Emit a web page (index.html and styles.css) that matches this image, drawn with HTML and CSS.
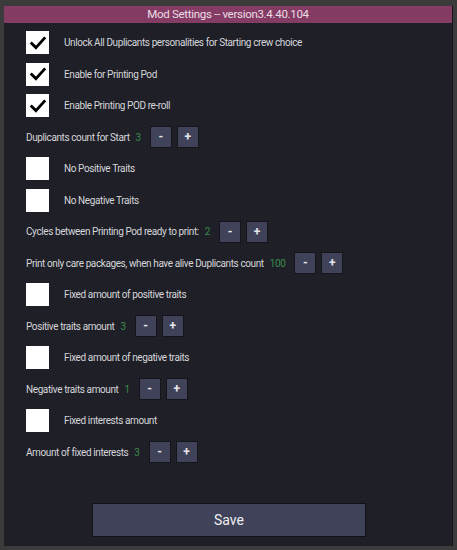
FILE: index.html
```html
<!DOCTYPE html>
<html>
  <head>
    <meta charset='utf-8' />
    <title>Mod Settings</title>
    <link rel="stylesheet" href="styles.css">
  </head>
  <body>
    <div class='window'>
      <div class='titlebar'>Mod Settings -- version3.4.40.104</div>
      <main class='settings'>
        <div class='row'>
          <span class='check on'><svg viewBox='0 0 24 24'><path d='M4.5 12.5 L9.5 17.5 L19.5 6.5' /></svg></span>
          <span class='label'>Unlock All Duplicants personalities for Starting crew choice</span>
        </div>
        <div class='row'>
          <span class='check on'><svg viewBox='0 0 24 24'><path d='M4.5 12.5 L9.5 17.5 L19.5 6.5' /></svg></span>
          <span class='label'>Enable for Printing Pod</span>
        </div>
        <div class='row'>
          <span class='check on'><svg viewBox='0 0 24 24'><path d='M4.5 12.5 L9.5 17.5 L19.5 6.5' /></svg></span>
          <span class='label'>Enable Printing POD re-roll</span>
        </div>
        <div class='row'>
          <span class='name'>Duplicants count for Start</span>
          <span class='value'>3</span>
          <button class='step'>-</button>
          <button class='step'>+</button>
        </div>
        <div class='row'>
          <span class='check'></span>
          <span class='label'>No Positive Traits</span>
        </div>
        <div class='row'>
          <span class='check'></span>
          <span class='label'>No Negative Traits</span>
        </div>
        <div class='row'>
          <span class='name'>Cycles between Printing Pod ready to print:</span>
          <span class='value'>2</span>
          <button class='step'>-</button>
          <button class='step'>+</button>
        </div>
        <div class='row'>
          <span class='name'>Print only care packages, when have alive Duplicants count</span>
          <span class='value'>100</span>
          <button class='step'>-</button>
          <button class='step'>+</button>
        </div>
        <div class='row'>
          <span class='check'></span>
          <span class='label'>Fixed amount of positive traits</span>
        </div>
        <div class='row'>
          <span class='name'>Positive traits amount</span>
          <span class='value'>3</span>
          <button class='step'>-</button>
          <button class='step'>+</button>
        </div>
        <div class='row'>
          <span class='check'></span>
          <span class='label'>Fixed amount of negative traits</span>
        </div>
        <div class='row'>
          <span class='name'>Negative traits amount</span>
          <span class='value'>1</span>
          <button class='step'>-</button>
          <button class='step'>+</button>
        </div>
        <div class='row'>
          <span class='check'></span>
          <span class='label'>Fixed interests amount</span>
        </div>
        <div class='row'>
          <span class='name'>Amount of fixed interests</span>
          <span class='value'>3</span>
          <button class='step'>-</button>
          <button class='step'>+</button>
        </div>
      </main>
      <div class='footer'>
        <button class='save'>Save</button>
      </div>
    </div>
  </body>
</html>
```

FILE: styles.css
```css
* {
  box-sizing: border-box;
}
body, html {
  margin: 0;
  padding: 0;
  width: 100vw;
  height: 100vh;
}
body {
  background: #3b3b3c;
  font-family: 'Roboto', sans-serif;
  color: #d6d6da;
  padding: 6px 4px 4px 4px;
}
.window {
  height: 540px;
  display: flex;
  flex-direction: column;
  background: #1e1f27;
  border-right: 1px solid #15161a;
}
.titlebar {
  height: 17px;
  line-height: 17px;
  background: #843c65;
  color: #ecdce6;
  text-align: center;
  font-size: 11.5px;
  letter-spacing: -0.3px;
}
.settings {
  flex: 1;
  padding: 4px 22px 0;
  display: flex;
  flex-direction: column;
}
.row {
  height: 31.5px;
  display: flex;
  align-items: center;
  font-size: 10px;
  letter-spacing: -0.4px;
}
.check {
  width: 23px;
  height: 23px;
  background: #ffffff;
  margin-right: 15px;
  display: flex;
  align-items: center;
  justify-content: center;
}
.check svg {
  width: 20px;
  height: 20px;
  fill: none;
  stroke: #000000;
  stroke-width: 3.4;
  stroke-linecap: square;
}
.value {
  color: #3a8d4d;
  margin-left: 6px;
  margin-right: 9px;
}
.step {
  width: 22px;
  height: 22px;
  margin: 0 5px 0 0;
  padding: 0;
  background: #3f4259;
  border: 1px solid #14151b;
  color: #e6e6ea;
  font-family: 'Roboto', sans-serif;
  font-size: 12px;
  font-weight: bold;
}
.footer {
  display: flex;
  justify-content: center;
  padding: 0 0 9px 2px;
}
.save {
  width: 274px;
  height: 34px;
  background: #3f4259;
  border: 1px solid #111218;
  color: #eeeef2;
  font-family: 'Roboto', sans-serif;
  font-size: 14px;
}
```
